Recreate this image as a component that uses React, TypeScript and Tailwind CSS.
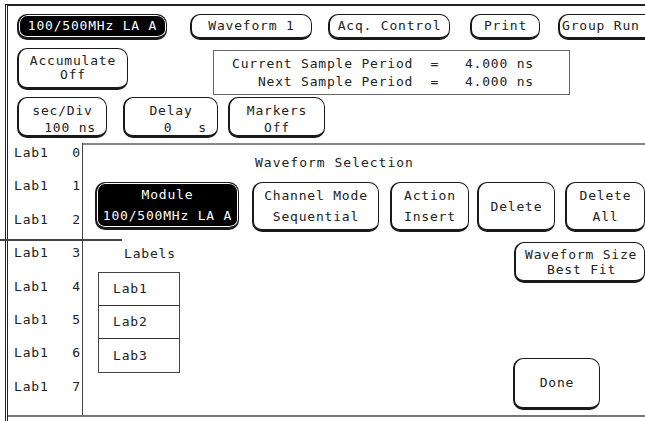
import React from "react";

const btnBase =
  "flex flex-col shrink-0 rounded-[10px] border-t border-r-[1.5px] border-l-[2.5px] border-b-[3px] border-[#1a1a1a]";

function Btn({
  cls,
  dark,
  children,
}: {
  cls: string;
  dark?: boolean;
  children: React.ReactNode;
}) {
  return (
    <div
      className={
        btnBase +
        " " +
        (dark
          ? "bg-black text-white shadow-[inset_0_0_0_1px_#fff]"
          : "bg-white text-[#222]") +
        " " +
        cls
      }
    >
      {children}
    </div>
  );
}

const labelRows = [0, 1, 2, 3, 4, 5, 6, 7];

export default function App() {
  return (
    <div className="relative w-[645px] h-[421px] overflow-hidden bg-white text-[#222] font-['DejaVu_Sans_Mono',monospace] text-[13px] tracking-[0.8px]">
      <div className="ml-[5px] mt-[4px] h-[417px] border-t-2 border-l-[3px] border-double border-[#222] flex flex-col">
        {/* Row 1 */}
        <div className="flex items-start mt-[8px]">
          <Btn dark cls="ml-[9px] w-[150px] h-[26px] items-center justify-center leading-[16px]">
            <span>100/500MHz LA A</span>
          </Btn>
          <Btn cls="ml-[23px] w-[122px] h-[26px] items-center justify-center leading-[16px]">
            <span>Waveform 1</span>
          </Btn>
          <Btn cls="ml-[16px] w-[122px] h-[26px] items-center justify-center leading-[16px]">
            <span>Acq. Control</span>
          </Btn>
          <Btn cls="ml-[20px] w-[70px] h-[26px] items-center justify-center leading-[16px]">
            <span>Print</span>
          </Btn>
          <Btn cls="ml-[18px] w-[100px] h-[26px] items-start justify-center pl-[2px] leading-[16px]">
            <span>Group Run</span>
          </Btn>
        </div>

        {/* Row 2 */}
        <div className="flex items-start mt-[8px]">
          <Btn cls="ml-[9px] w-[111px] h-[42px] items-center justify-center leading-[14px]">
            <span>Accumulate</span>
            <span>Off</span>
          </Btn>
          <div className="ml-[85px] mt-[2px] w-[357px] h-[45px] border border-[#666] flex flex-col justify-center pl-[18px] leading-[18px] whitespace-pre">
            <span>Current Sample Period  =   4.000 ns</span>
            <span>   Next Sample Period  =   4.000 ns</span>
          </div>
        </div>

        {/* Row 3 */}
        <div className="flex items-start mt-[2px]">
          <Btn cls="ml-[9px] w-[90px] h-[41px] justify-center pt-[4px] leading-[17px]">
            <span className="self-center">sec/Div</span>
            <span className="self-end pr-[10px]">100 ns</span>
          </Btn>
          <Btn cls="ml-[16px] w-[95px] h-[41px] justify-center pt-[4px] leading-[17px]">
            <span className="self-center">Delay</span>
            <span className="self-end pr-[10px] whitespace-pre">0   s</span>
          </Btn>
          <Btn cls="ml-[10px] w-[97px] h-[41px] items-center justify-center pt-[4px] leading-[17px]">
            <span>Markers</span>
            <span>Off</span>
          </Btn>
        </div>

        {/* Bottom region */}
        <div className="mt-[5px] h-[274px] flex border-b-2 border-[#777]">
          {/* Label column */}
          <div className="w-[78px] border-r border-r-[#444] flex flex-col pt-[2px] pl-[6px] pr-[1px]">
            {labelRows.map((n) => (
              <div key={n} className="h-[33.4px] flex items-start justify-between leading-[16px] shrink-0">
                <span>Lab1</span>
                <span>{n}</span>
              </div>
            ))}
          </div>

          {/* Waveform Selection panel */}
          <div className="flex-1 border-t-2 border-[#888] flex flex-col">
            <div className="pt-[10px] ml-[172px] leading-[16px] tracking-[1px]">
              Waveform Selection
            </div>
            <div className="flex items-start mt-[11px] pl-[12px]">
              <Btn dark cls="w-[144px] h-[48px] items-center justify-center leading-[21px]">
                <span>Module</span>
                <span>100/500MHz LA A</span>
              </Btn>
              <Btn cls="ml-[13px] w-[127px] h-[50px] items-center justify-center leading-[21px]">
                <span>Channel Mode</span>
                <span>Sequential</span>
              </Btn>
              <Btn cls="ml-[11px] w-[79px] h-[50px] items-center justify-center leading-[21px]">
                <span>Action</span>
                <span>Insert</span>
              </Btn>
              <Btn cls="ml-[8px] w-[78px] h-[50px] items-center justify-center leading-[21px]">
                <span>Delete</span>
              </Btn>
              <Btn cls="ml-[10px] w-[80px] h-[50px] items-center justify-center leading-[21px]">
                <span>Delete</span>
                <span>All</span>
              </Btn>
            </div>
            <div className="flex items-start">
              <div className="ml-[15px] flex flex-col">
                <div className="mt-[14px] pl-[26px] leading-[16px]">Labels</div>
                <div className="mt-[10px] w-[82px] border border-[#444] flex flex-col">
                  {["Lab1", "Lab2", "Lab3"].map((l, i) => (
                    <div
                      key={l}
                      className={
                        "h-[33px] flex items-center pl-[14px] leading-[16px] " +
                        (i < 2 ? "border-b border-[#333]" : "")
                      }
                    >
                      {l}
                    </div>
                  ))}
                </div>
              </div>
              <div className="ml-[334px] flex flex-col items-start">
                <Btn cls="mt-[10px] w-[131px] h-[41px] items-start justify-center pl-[9px] leading-[15px]">
                  <span>Waveform Size</span>
                  <span className="pl-[22px]">Best Fit</span>
                </Btn>
                <Btn cls="mt-[75px] ml-[-1px] w-[87px] h-[52px] items-center justify-center leading-[16px]">
                  <span>Done</span>
                </Btn>
              </div>
            </div>
          </div>
        </div>
      </div>
      {/* cursor line crossing label column */}
      <div className="absolute left-0 top-[239px] w-[122px] h-[2px] bg-[#444]" />
    </div>
  );
}
